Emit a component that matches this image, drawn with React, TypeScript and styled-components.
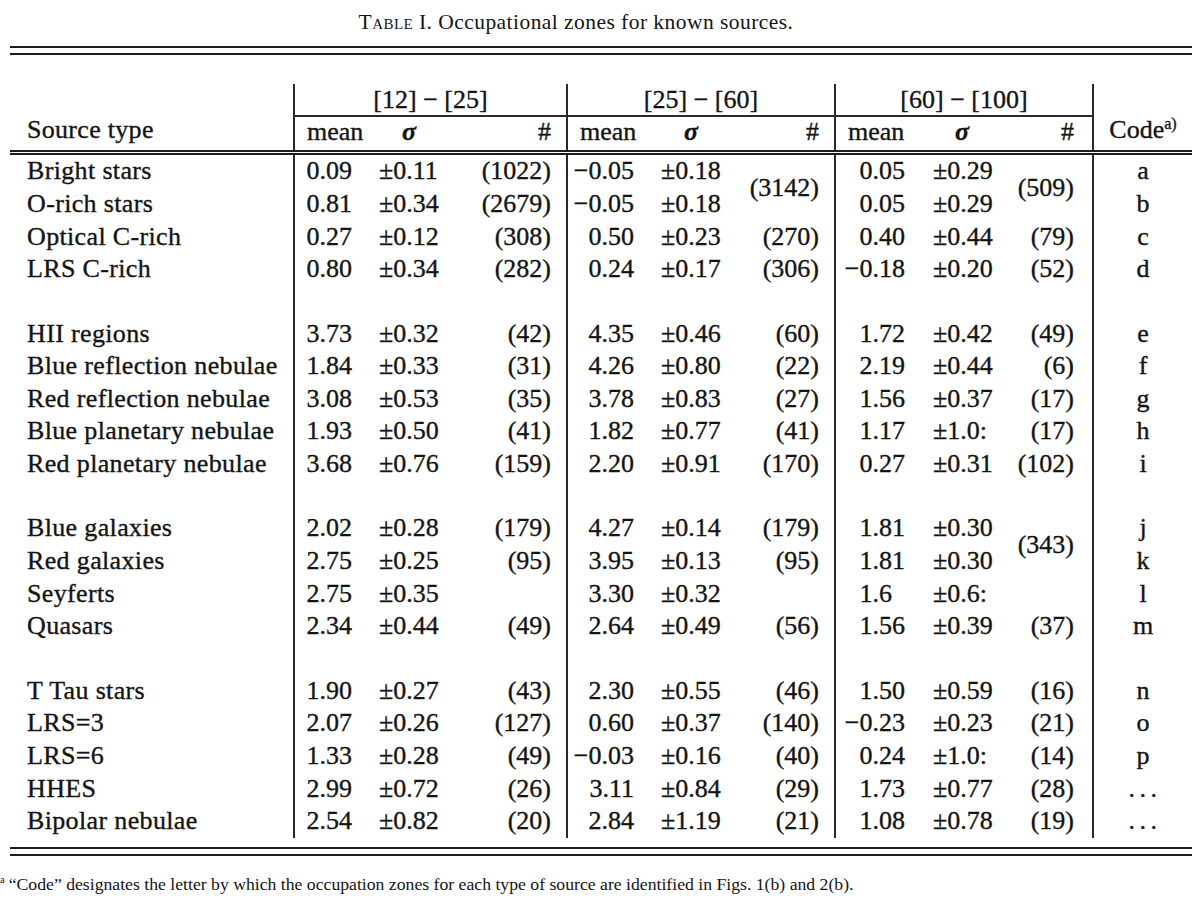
import React from "react";
import styled, { createGlobalStyle } from "styled-components";

const GlobalStyle = createGlobalStyle`
  html, body { margin: 0; padding: 0; background: #ffffff; }
  body { font-family: "Liberation Serif", "Times New Roman", serif; color: #141414; }
`;

const Page = styled.div`
  width: 1200px;
  height: 902px;
  overflow: hidden;
  box-sizing: border-box;
  padding: 0 8px 0 10px;
  display: flex;
  flex-direction: column;
`;

const Caption = styled.div`
  margin-top: 10px;
  padding-right: 50px;
  font-size: 21.5px;
  line-height: 24px;
  letter-spacing: 0.45px;
  text-align: center;
`;

const SmallCaps = styled.span`
  font-variant: small-caps;
`;

const DoubleRule = styled.div<{ $top: number; $gap: number }>`
  margin-top: ${(p) => p.$top}px;
  height: ${(p) => p.$gap}px;
  border-top: 2px solid #1c1c1c;
  border-bottom: 2px solid #1c1c1c;
`;

const Table = styled.table`
  margin-top: 29px;
  width: 1182px;
  table-layout: fixed;
  border-collapse: collapse;
  font-size: 26px;
  line-height: 30px;
  -webkit-text-stroke: 0.35px #141414;
`;

const HeadRow = styled.tr<{ $h: number }>`
  height: ${(p) => p.$h}px;
`;

const BodyRow = styled.tr`
  height: 32.65px;
`;

const SpacerRow = styled.tr`
  height: 31.7px;
`;

const Cell = styled.td`
  padding: 0;
  white-space: nowrap;
  vertical-align: middle;
`;

const SourceHead = styled(Cell)`
  vertical-align: bottom;
  padding: 0 0 5px 17px;
  text-align: left;
  letter-spacing: 0.3px;
`;

const GroupHead = styled(Cell)`
  border-left: 2px solid #2a2a2a;
  border-bottom: 2px solid #2a2a2a;
  text-align: center;
`;

const CodeHead = styled(Cell)`
  border-left: 2px solid #2a2a2a;
  vertical-align: bottom;
  padding-bottom: 5px;
  text-align: center;
`;

const SubHead = styled(Cell)<{ $align: "left" | "right"; $pl?: number; $pr?: number; $divider?: boolean }>`
  text-align: ${(p) => p.$align};
  padding-left: ${(p) => p.$pl ?? 0}px;
  padding-right: ${(p) => p.$pr ?? 0}px;
  padding-bottom: 3px;
  border-left: ${(p) => (p.$divider ? "2px solid #2a2a2a" : "none")};
`;

const Sigma = styled.span`
  font-style: italic;
  font-weight: bold;
`;

const Sup = styled.sup`
  font-size: 0.62em;
  line-height: 0;
  vertical-align: 0.55em;
`;

const RuleCell = styled.td`
  padding: 0;
  height: 5px;
`;

const InnerRule = styled.div`
  height: 1px;
  border-top: 2px solid #1c1c1c;
  border-bottom: 2px solid #1c1c1c;
`;

const SourceCell = styled(Cell)`
  padding-left: 17px;
  text-align: left;
  letter-spacing: 0.35px;
`;

const MeanCell = styled(Cell)`
  border-left: 2px solid #2a2a2a;
  padding-right: 8px;
  text-align: right;
`;

const SigmaCell = styled(Cell)<{ $pl: number }>`
  padding-left: ${(p) => p.$pl}px;
  text-align: left;
`;

const CountCell = styled(Cell)<{ $pr: number }>`
  padding-right: ${(p) => p.$pr}px;
  text-align: right;
`;

const CodeCell = styled(Cell)`
  border-left: 2px solid #2a2a2a;
  text-align: center;
`;

const Dots = styled.span`
  letter-spacing: 4.5px;
  margin-left: 4px;
`;

const DigitPad = styled.span`
  display: inline-block;
  width: 13px;
`;

const Footnote = styled.div`
  margin: 17px 0 0 -10px;
  font-size: 17.7px;
  line-height: 22px;
  white-space: nowrap;
`;

const FootSup = styled.sup`
  font-size: 0.6em;
  line-height: 0;
  margin-right: 4px;
`;

type Count = string | { span: number; text: string } | null;
type Group = { mean: React.ReactNode; sigma: string; count: Count };
type Row = { name: string; groups: [Group, Group, Group]; code: string };

const g = (mean: React.ReactNode, sigma: string, count: Count): Group => ({ mean, sigma, count });

const sections: Row[][] = [
  [
    { name: "Bright stars", groups: [g("0.09", "±0.11", "(1022)"), g("−0.05", "±0.18", { span: 2, text: "(3142)" }), g("0.05", "±0.29", { span: 2, text: "(509)" })], code: "a" },
    { name: "O-rich stars", groups: [g("0.81", "±0.34", "(2679)"), g("−0.05", "±0.18", null), g("0.05", "±0.29", null)], code: "b" },
    { name: "Optical C-rich", groups: [g("0.27", "±0.12", "(308)"), g("0.50", "±0.23", "(270)"), g("0.40", "±0.44", "(79)")], code: "c" },
    { name: "LRS C-rich", groups: [g("0.80", "±0.34", "(282)"), g("0.24", "±0.17", "(306)"), g("−0.18", "±0.20", "(52)")], code: "d" },
  ],
  [
    { name: "HII regions", groups: [g("3.73", "±0.32", "(42)"), g("4.35", "±0.46", "(60)"), g("1.72", "±0.42", "(49)")], code: "e" },
    { name: "Blue reflection nebulae", groups: [g("1.84", "±0.33", "(31)"), g("4.26", "±0.80", "(22)"), g("2.19", "±0.44", "(6)")], code: "f" },
    { name: "Red reflection nebulae", groups: [g("3.08", "±0.53", "(35)"), g("3.78", "±0.83", "(27)"), g("1.56", "±0.37", "(17)")], code: "g" },
    { name: "Blue planetary nebulae", groups: [g("1.93", "±0.50", "(41)"), g("1.82", "±0.77", "(41)"), g("1.17", "±1.0:", "(17)")], code: "h" },
    { name: "Red planetary nebulae", groups: [g("3.68", "±0.76", "(159)"), g("2.20", "±0.91", "(170)"), g("0.27", "±0.31", "(102)")], code: "i" },
  ],
  [
    { name: "Blue galaxies", groups: [g("2.02", "±0.28", "(179)"), g("4.27", "±0.14", "(179)"), g("1.81", "±0.30", { span: 2, text: "(343)" })], code: "j" },
    { name: "Red galaxies", groups: [g("2.75", "±0.25", "(95)"), g("3.95", "±0.13", "(95)"), g("1.81", "±0.30", null)], code: "k" },
    { name: "Seyferts", groups: [g("2.75", "±0.35", ""), g("3.30", "±0.32", ""), g(<>1.6<DigitPad /></>, "±0.6:", "")], code: "l" },
    { name: "Quasars", groups: [g("2.34", "±0.44", "(49)"), g("2.64", "±0.49", "(56)"), g("1.56", "±0.39", "(37)")], code: "m" },
  ],
  [
    { name: "T Tau stars", groups: [g("1.90", "±0.27", "(43)"), g("2.30", "±0.55", "(46)"), g("1.50", "±0.59", "(16)")], code: "n" },
    { name: "LRS=3", groups: [g("2.07", "±0.26", "(127)"), g("0.60", "±0.37", "(140)"), g("−0.23", "±0.23", "(21)")], code: "o" },
    { name: "LRS=6", groups: [g("1.33", "±0.28", "(49)"), g("−0.03", "±0.16", "(40)"), g("0.24", "±1.0:", "(14)")], code: "p" },
    { name: "HHES", groups: [g("2.99", "±0.72", "(26)"), g("3.11", "±0.84", "(29)"), g("1.73", "±0.77", "(28)")], code: "..." },
    { name: "Bipolar nebulae", groups: [g("2.54", "±0.82", "(20)"), g("2.84", "±1.19", "(21)"), g("1.08", "±0.78", "(19)")], code: "..." },
  ],
];

const colWidths = [284, 66, 110, 97, 75, 98, 95, 78, 97, 83, 99];
const sigmaPad = [19, 19, 20];
const countPad = [15, 15, 18];
const groupTitles = ["[12] − [25]", "[25] − [60]", "[60] − [100]"];

const DataRow: React.FC<{ row: Row }> = ({ row }) => (
  <BodyRow>
    <SourceCell>{row.name}</SourceCell>
    {row.groups.map((grp, i) => (
      <React.Fragment key={i}>
        <MeanCell>{grp.mean}</MeanCell>
        <SigmaCell $pl={sigmaPad[i]}>{grp.sigma}</SigmaCell>
        {grp.count === null ? null : typeof grp.count === "string" ? (
          <CountCell $pr={countPad[i]}>{grp.count}</CountCell>
        ) : (
          <CountCell $pr={countPad[i]} rowSpan={grp.count.span}>
            {grp.count.text}
          </CountCell>
        )}
      </React.Fragment>
    ))}
    <CodeCell>{row.code === "..." ? <Dots>...</Dots> : row.code}</CodeCell>
  </BodyRow>
);

const Spacer: React.FC = () => (
  <SpacerRow>
    <SourceCell />
    {[0, 1, 2].map((i) => (
      <React.Fragment key={i}>
        <MeanCell />
        <SigmaCell $pl={0} />
        <CountCell $pr={0} />
      </React.Fragment>
    ))}
    <CodeCell />
  </SpacerRow>
);

export default function App() {
  return (
    <>
      <GlobalStyle />
      <Page>
        <Caption>
          <SmallCaps>Table</SmallCaps> I. Occupational zones for known sources.
        </Caption>
        <DoubleRule $top={12} $gap={5} />
        <Table>
          <colgroup>
            {colWidths.map((w, i) => (
              <col key={i} style={{ width: w }} />
            ))}
          </colgroup>
          <thead>
            <HeadRow $h={32}>
              <SourceHead rowSpan={2}>Source type</SourceHead>
              {groupTitles.map((t) => (
                <GroupHead key={t} colSpan={3}>
                  {t}
                </GroupHead>
              ))}
              <CodeHead rowSpan={2}>
                Code<Sup>a)</Sup>
              </CodeHead>
            </HeadRow>
            <HeadRow $h={33}>
              {[0, 1, 2].map((i) => (
                <React.Fragment key={i}>
                  <SubHead $align="left" $pl={12} $divider>
                    mean
                  </SubHead>
                  <SubHead $align="left" $pl={42}>
                    <Sigma>σ</Sigma>
                  </SubHead>
                  <SubHead $align="right" $pr={countPad[i]}>
                    #
                  </SubHead>
                </React.Fragment>
              ))}
            </HeadRow>
            <tr>
              <RuleCell colSpan={11}>
                <InnerRule />
              </RuleCell>
            </tr>
          </thead>
          <tbody>
            {sections.map((sec, si) => (
              <React.Fragment key={si}>
                {si > 0 && <Spacer />}
                {sec.map((row) => (
                  <DataRow key={row.name} row={row} />
                ))}
              </React.Fragment>
            ))}
          </tbody>
        </Table>
        <DoubleRule $top={9} $gap={5} />
        <Footnote>
          <FootSup>a</FootSup>“Code” designates the letter by which the occupation zones for each type of source are identified in Figs. 1(b) and 2(b).
        </Footnote>
      </Page>
    </>
  );
}
